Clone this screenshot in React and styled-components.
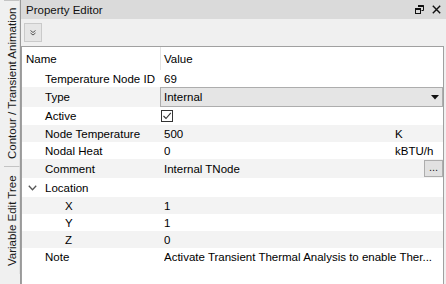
import React from "react";
import styled, { createGlobalStyle } from "styled-components";

const GlobalStyle = createGlobalStyle`
  html, body { margin: 0; padding: 0; overflow: hidden; background: #f0f0f0; }
  body { font-family: "Liberation Sans", Arial, sans-serif; font-size: 11.5px; color: #000; }
`;

const Root = styled.div`
  display: flex;
  width: 446px;
  height: 284px;
`;

const SideStrip = styled.div`
  width: 21px;
  flex: none;
  background: #f0f0f0;
  border-right: 1px solid #9a9a9a;
  display: flex;
  flex-direction: column;
  padding-left: 4px;
  box-sizing: border-box;
`;

const SideTab = styled.div`
  width: 16px;
  height: ${(p) => p.$h}px;
  box-sizing: border-box;
  border-bottom: 1px solid #c4c4c4;
  border-left: 1px solid #e2e2e2;
  display: flex;
  align-items: center;
  justify-content: center;
  writing-mode: vertical-rl;
  transform: rotate(180deg);
  white-space: nowrap;
  font-size: 11.5px;
  color: #1a1a1a;
`;

const Panel = styled.div`
  flex: 1;
  display: flex;
  flex-direction: column;
  min-width: 0;
`;

const TitleBar = styled.div`
  height: 19px;
  flex: none;
  background: #dadada;
  display: flex;
  align-items: center;
  padding: 0 4px 0 5px;
  font-size: 11.5px;
  color: #111;
`;

const Title = styled.span`
  flex: 1;
`;

const TitleIcons = styled.div`
  display: flex;
  align-items: center;
  gap: 8px;
  padding-right: 1px;
`;

const Toolbar = styled.div`
  height: 27px;
  flex: none;
  background: #f0f0f0;
  display: flex;
  align-items: center;
  padding-left: 3px;
`;

const ToolButton = styled.div`
  width: 18px;
  height: 19px;
  box-sizing: border-box;
  background: #e6e6e6;
  border: 1px solid #cacaca;
  display: flex;
  align-items: center;
  justify-content: center;
`;

const Grid = styled.div`
  flex: 1;
  background: #fff;
  border-top: 1px solid #a0a0a0;
  border-left: 1px solid #a0a0a0;
  border-right: 1px solid #a0a0a0;
  margin-right: 2px;
  overflow: hidden;
`;

const Row = styled.div`
  display: grid;
  grid-template-columns: 138px 1fr;
  height: ${(p) => p.$h}px;
  background: ${(p) => (p.$alt ? "#f3f3f3" : "#ffffff")};
`;

const NameCell = styled.div`
  display: flex;
  align-items: center;
  padding-left: ${(p) => p.$pad}px;
  white-space: nowrap;
  overflow: hidden;
  position: relative;
`;

const ValueCell = styled.div`
  display: flex;
  align-items: center;
  padding-left: ${(p) => (p.$pad ?? 4)}px;
  white-space: nowrap;
  overflow: hidden;
  min-width: 0;
`;

const HeaderValue = styled(ValueCell)`
  border-left: 1px solid #e3e3e3;
  padding-left: 3px;
`;

const Text = styled.span`
  flex: 1;
  overflow: hidden;
  white-space: nowrap;
`;

const Unit = styled.span`
  width: 48px;
  flex: none;
`;

const Select = styled.div`
  flex: 1;
  align-self: stretch;
  display: flex;
  align-items: center;
  box-sizing: border-box;
  background: #e5e5e5;
  border: 1px solid #adadad;
  padding: 0 3px 0 3px;
`;

const EllipsisButton = styled.div`
  width: 19px;
  height: 17px;
  box-sizing: border-box;
  flex: none;
  background: #e1e1e1;
  border: 1px solid #adadad;
  display: flex;
  align-items: flex-end;
  justify-content: center;
  font-size: 11px;
  line-height: 11px;
  padding-bottom: 3px;
  color: #222;
`;

const CheckBox = styled.div`
  width: 12px;
  height: 12px;
  box-sizing: border-box;
  border: 1px solid #333;
  background: #fff;
  display: flex;
  align-items: center;
  justify-content: center;
`;

const Expander = styled.span`
  position: absolute;
  left: 6px;
  top: 50%;
  margin-top: -3px;
  display: flex;
`;

const rows = [
  { name: "Temperature Node ID", level: 1, value: "69", h: 17 },
  { name: "Type", level: 1, kind: "select", value: "Internal", h: 20 },
  { name: "Active", level: 1, kind: "check", h: 18 },
  { name: "Node Temperature", level: 1, value: "500", unit: "K", h: 17 },
  { name: "Nodal Heat", level: 1, value: "0", unit: "kBTU/h", h: 17 },
  { name: "Comment", level: 1, value: "Internal TNode", kind: "ellipsis", h: 19 },
  { name: "Location", level: 1, expander: true, h: 19 },
  { name: "X", level: 2, value: "1", h: 17 },
  { name: "Y", level: 2, value: "1", h: 17 },
  { name: "Z", level: 2, value: "0", h: 17 },
  { name: "Note", level: 1, value: "Activate Transient Thermal Analysis to enable Ther...", h: 17 },
];

const pads = { 0: 4, 1: 23, 2: 43 };

function RestoreIcon() {
  return (
    <svg width="9" height="9" viewBox="0 0 9 9">
      <path d="M3 0.5 H8.5 V5.5 H6.5" fill="none" stroke="#111" strokeWidth="1" />
      <path d="M3 1 H8.5" stroke="#111" strokeWidth="2" />
      <rect x="0.5" y="3.5" width="5" height="5" fill="none" stroke="#111" strokeWidth="1" />
      <path d="M0.5 4 H5.5" stroke="#111" strokeWidth="2" />
    </svg>
  );
}

function CloseIcon() {
  return (
    <svg width="9" height="9" viewBox="0 0 9 9">
      <path d="M0.8 0.8 L8.2 8.2 M8.2 0.8 L0.8 8.2" stroke="#111" strokeWidth="1.4" />
    </svg>
  );
}

function CollapseIcon() {
  return (
    <svg width="6" height="6" viewBox="0 0 6 6">
      <path d="M0.5 0.5 L3 2.5 L5.5 0.5 M0.5 3 L3 5 L5.5 3" fill="none" stroke="#555" strokeWidth="1" />
    </svg>
  );
}

function DropArrow() {
  return (
    <svg width="8" height="5" viewBox="0 0 8 5">
      <path d="M0 0 H8 L4 4.5 Z" fill="#111" />
    </svg>
  );
}

function CheckMark() {
  return (
    <svg width="10" height="10" viewBox="0 0 10 10">
      <path d="M1.5 5 L4 7.5 L8.8 1.8" fill="none" stroke="#333" strokeWidth="1.1" />
    </svg>
  );
}

function Chevron() {
  return (
    <svg width="9" height="6" viewBox="0 0 9 6">
      <path d="M0.8 0.8 L4.5 4.8 L8.2 0.8" fill="none" stroke="#555" strokeWidth="1.3" />
    </svg>
  );
}

function renderValue(r) {
  if (r.kind === "select") {
    return (
      <ValueCell $pad={0}>
        <Select>
          <Text>{r.value}</Text>
          <DropArrow />
        </Select>
      </ValueCell>
    );
  }
  if (r.kind === "check") {
    return (
      <ValueCell $pad={1}>
        <CheckBox>
          <CheckMark />
        </CheckBox>
      </ValueCell>
    );
  }
  if (r.kind === "ellipsis") {
    return (
      <ValueCell>
        <Text>{r.value}</Text>
        <EllipsisButton>...</EllipsisButton>
      </ValueCell>
    );
  }
  return (
    <ValueCell>
      <Text>{r.value}</Text>
      {r.unit && <Unit>{r.unit}</Unit>}
    </ValueCell>
  );
}

export default function App() {
  return (
    <>
      <GlobalStyle />
      <Root>
        <SideStrip>
          <SideTab $h={166}>Contour / Transient Animation</SideTab>
          <SideTab $h={108}>Variable Edit Tree</SideTab>
        </SideStrip>
        <Panel>
          <TitleBar>
            <Title>Property Editor</Title>
            <TitleIcons>
              <RestoreIcon />
              <CloseIcon />
            </TitleIcons>
          </TitleBar>
          <Toolbar>
            <ToolButton>
              <CollapseIcon />
            </ToolButton>
          </Toolbar>
          <Grid>
            <Row $h={23}>
              <NameCell $pad={pads[0]}>Name</NameCell>
              <HeaderValue>Value</HeaderValue>
            </Row>
            {rows.map((r, i) => (
              <Row key={r.name} $h={r.h} $alt={i % 2 === 1}>
                <NameCell $pad={pads[r.level]}>
                  {r.expander && (
                    <Expander>
                      <Chevron />
                    </Expander>
                  )}
                  {r.name}
                </NameCell>
                {renderValue(r)}
              </Row>
            ))}
          </Grid>
        </Panel>
      </Root>
    </>
  );
}
